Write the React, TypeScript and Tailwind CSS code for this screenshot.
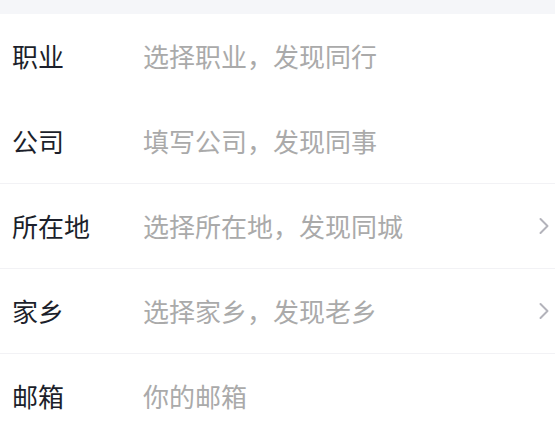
import React from "react";

const rows = [
  { label: "职业", ph: "选择职业，发现同行", arrow: false },
  { label: "公司", ph: "填写公司，发现同事", arrow: false },
  { label: "所在地", ph: "选择所在地，发现同城", arrow: true },
  { label: "家乡", ph: "选择家乡，发现老乡", arrow: true },
  { label: "邮箱", ph: "你的邮箱", arrow: false },
];

export default function App() {
  return (
    <div
      className="w-[555px] h-[436px] overflow-hidden bg-white"
      style={{ fontFamily: '"Noto Sans CJK SC", "Noto Sans", sans-serif' }}
    >
      <div className="h-[14px] bg-[#f5f6f9]" />
      {rows.map((r, i) => (
        <div key={i}>
          <div className="h-[84px] flex items-center pl-[12px] pr-[5px]">
            <div className="w-[131px] text-[26px] text-[#1c1f2b] leading-none">{r.label}</div>
            <div className="flex-1 text-[26px] text-[#aaaaaa] leading-none">{r.ph}</div>
            {r.arrow && (
              <svg width="12" height="18" viewBox="0 0 12 18">
                <path d="M2.5 2 L9.5 9 L2.5 16" fill="none" stroke="#b3b3bb" strokeWidth="2" strokeLinecap="round" strokeLinejoin="round" />
              </svg>
            )}
          </div>
          {i < rows.length - 1 && (
            <div className={i === 0 ? "h-px bg-white" : "h-px bg-[#f2f2f5]"} />
          )}
        </div>
      ))}
    </div>
  );
}
